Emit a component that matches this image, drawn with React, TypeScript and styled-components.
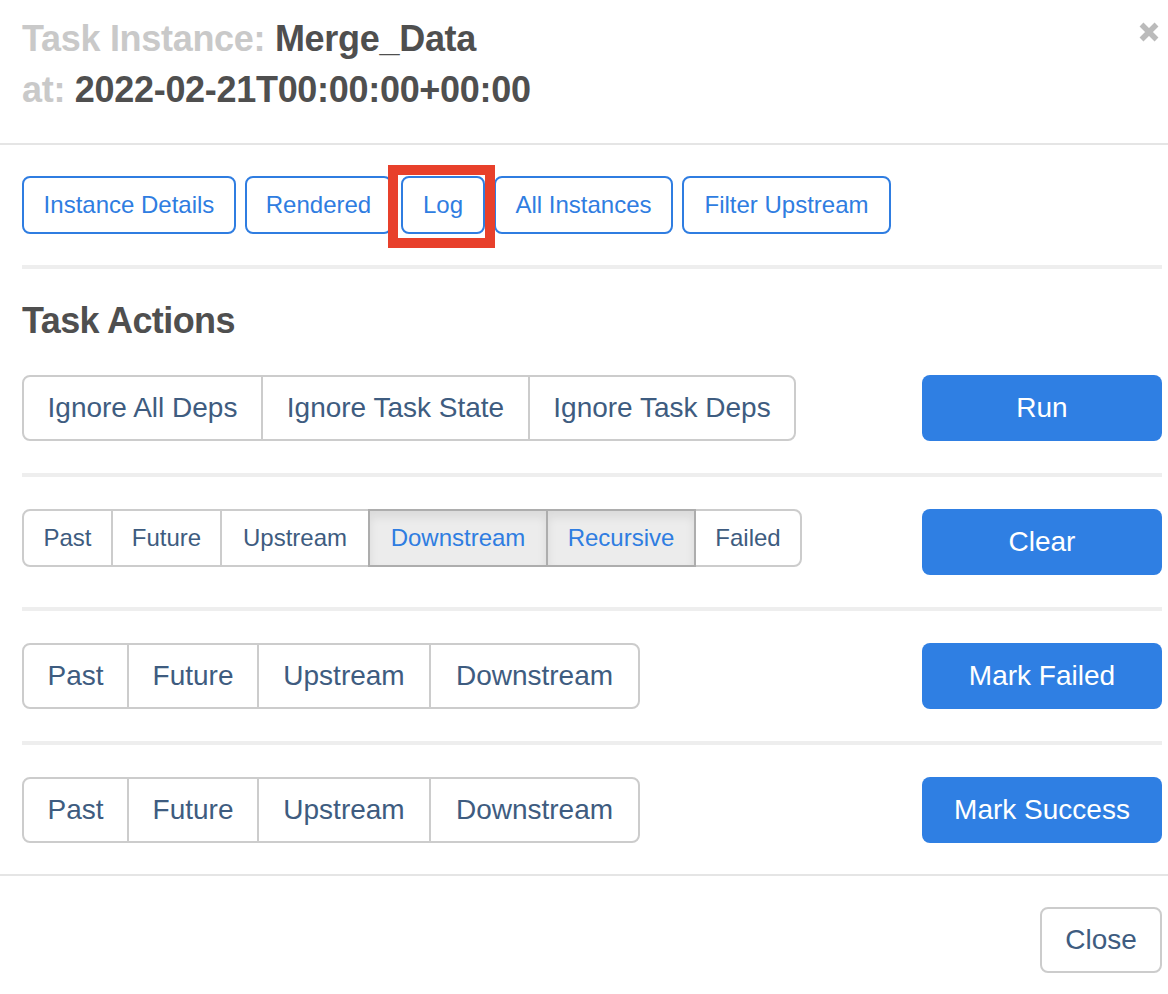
import React from 'react';
import styled, { createGlobalStyle, css } from 'styled-components';

const GlobalStyle = createGlobalStyle`
    html, body {
        margin: 0;
        padding: 0;
        background: #fff;
    }
    body {
        font-family: "Liberation Sans", Arial, Helvetica, sans-serif;
        -webkit-font-smoothing: antialiased;
    }
`;

// Modal shell
const Modal = styled.div`
    width: 1168px;
    height: 994px;
    background: #fff;
    overflow: hidden;
`;

const Header = styled.div`
    display: flex;
    justify-content: space-between;
    align-items: flex-start;
    padding: 13px 9px 28px 22px;
    border-bottom: 2px solid #e5e5e5;
`;

const Title = styled.h4`
    margin: 0;
    font-size: 36px;
    line-height: 51px;
    font-weight: 700;
    letter-spacing: -0.3px;
    color: #4f4f4f;
`;

const Label = styled.span`
    color: #c9c9c9;
`;

const CloseX = styled.button`
    margin-top: 9px;
    width: 20px;
    height: 20px;
    padding: 0;
    border: none;
    background: none;
    cursor: pointer;
    display: flex;
`;

const Body = styled.div`
    padding: 31px 6px 31px 22px;
`;

const NavRow = styled.div`
    display: flex;
    gap: 9px;
`;

const NavButton = styled.a<{ $w: number }>`
    box-sizing: border-box;
    width: ${(p) => p.$w}px;
    height: 58px;
    display: inline-flex;
    align-items: center;
    justify-content: center;
    border: 2px solid #2f7de1;
    border-radius: 8px;
    color: #2f7de1;
    font-size: 24px;
    text-decoration: none;
    background: #fff;
    cursor: pointer;
`;

// red annotation box drawn over the Log button
const Highlight = styled.div`
    position: relative;
    display: flex;

    &::after {
        content: '';
        position: absolute;
        left: -13px;
        right: -10px;
        top: -11px;
        bottom: -14px;
        border: 10px solid #e8402b;
        pointer-events: none;
    }
`;

const Divider = styled.hr<{ $top?: number; $bottom?: number }>`
    margin: ${(p) => p.$top ?? 32}px 0 ${(p) => p.$bottom ?? 32}px;
    border: 0;
    border-top: 4px solid #eeeeee;
`;

const SectionTitle = styled.h3`
    margin: 32px 0 34px;
    font-size: 36px;
    line-height: 40px;
    font-weight: 700;
    letter-spacing: -0.6px;
    color: #4f4f4f;
`;

const ActionRow = styled.div`
    display: flex;
    justify-content: space-between;
    align-items: flex-start;
`;

const Group = styled.div`
    display: flex;
`;

const GroupButton = styled.button<{ $w: number; $small?: boolean; $active?: boolean }>`
    box-sizing: border-box;
    width: ${(p) => p.$w}px;
    height: ${(p) => (p.$small ? 58 : 66)}px;
    padding: 0;
    display: inline-flex;
    align-items: center;
    justify-content: center;
    font-family: inherit;
    font-size: ${(p) => (p.$small ? 24 : 28)}px;
    color: #3e5c80;
    background: #fff;
    border: 2px solid #cccccc;
    border-radius: 0;
    position: relative;
    cursor: pointer;

    & + & {
        margin-left: -2px;
    }
    &:first-child {
        border-radius: 8px 0 0 8px;
    }
    &:last-child {
        border-radius: 0 8px 8px 0;
    }

    ${(p) =>
        p.$active &&
        css`
            z-index: 2;
            color: #2f7de1;
            background: #ececec;
            border-color: #adadad;
            box-shadow: inset 0 6px 10px rgba(0, 0, 0, 0.08);
        `}
`;

const PrimaryButton = styled.button`
    box-sizing: border-box;
    width: 240px;
    height: 66px;
    border: none;
    border-radius: 8px;
    background: #2f7fe3;
    color: #fff;
    font-family: inherit;
    font-size: 28px;
    cursor: pointer;
`;

const Footer = styled.div`
    display: flex;
    justify-content: flex-end;
    padding: 31px 6px 21px;
    border-top: 2px solid #e5e5e5;
`;

const DefaultButton = styled.button`
    box-sizing: border-box;
    width: 122px;
    height: 66px;
    border: 2px solid #cccccc;
    border-radius: 8px;
    background: #fff;
    color: #3e5c80;
    font-family: inherit;
    font-size: 28px;
    cursor: pointer;
`;

type Item = { label: string; w: number; active?: boolean };

const ignoreOpts: Item[] = [
    { label: 'Ignore All Deps', w: 241 },
    { label: 'Ignore Task State', w: 269 },
    { label: 'Ignore Task Deps', w: 268 },
];

const clearOpts: Item[] = [
    { label: 'Past', w: 91 },
    { label: 'Future', w: 111 },
    { label: 'Upstream', w: 150 },
    { label: 'Downstream', w: 180, active: true },
    { label: 'Recursive', w: 150, active: true },
    { label: 'Failed', w: 108 },
];

const markOpts: Item[] = [
    { label: 'Past', w: 107 },
    { label: 'Future', w: 132 },
    { label: 'Upstream', w: 174 },
    { label: 'Downstream', w: 211 },
];

const navLinks = [
    { label: 'Instance Details', w: 214 },
    { label: 'Rendered', w: 147 },
    { label: 'Log', w: 84, marked: true },
    { label: 'All Instances', w: 179 },
    { label: 'Filter Upstream', w: 209 },
];

const Options = ({ items, small }: { items: Item[]; small?: boolean }) => (
    <Group>
        {items.map((it) => (
            <GroupButton key={it.label} $w={it.w} $small={small} $active={it.active}>
                {it.label}
            </GroupButton>
        ))}
    </Group>
);

const App = () => {
    return (
        <>
            <GlobalStyle />
            <Modal>
                <Header>
                    <Title>
                        <Label>Task Instance:</Label> Merge_Data
                        <br />
                        <Label>at:</Label> 2022-02-21T00:00:00+00:00
                    </Title>
                    <CloseX aria-label="Close">
                        <svg width="20" height="20" viewBox="0 0 20 20">
                            <path d="M2.5 2.5 L17.5 17.5 M17.5 2.5 L2.5 17.5" stroke="#bbbbbb" strokeWidth="5.5" />
                        </svg>
                    </CloseX>
                </Header>

                <Body>
                    <NavRow>
                        {navLinks.map((l) =>
                            l.marked ? (
                                <Highlight key={l.label}>
                                    <NavButton $w={l.w}>{l.label}</NavButton>
                                </Highlight>
                            ) : (
                                <NavButton key={l.label} $w={l.w}>
                                    {l.label}
                                </NavButton>
                            )
                        )}
                    </NavRow>

                    <Divider $top={31} $bottom={0} />
                    <SectionTitle>Task Actions</SectionTitle>

                    <ActionRow>
                        <Options items={ignoreOpts} />
                        <PrimaryButton>Run</PrimaryButton>
                    </ActionRow>
                    <Divider />

                    <ActionRow>
                        <Options items={clearOpts} small />
                        <PrimaryButton>Clear</PrimaryButton>
                    </ActionRow>
                    <Divider />

                    <ActionRow>
                        <Options items={markOpts} />
                        <PrimaryButton>Mark Failed</PrimaryButton>
                    </ActionRow>
                    <Divider />

                    <ActionRow>
                        <Options items={markOpts} />
                        <PrimaryButton>Mark Success</PrimaryButton>
                    </ActionRow>
                </Body>

                <Footer>
                    <DefaultButton>Close</DefaultButton>
                </Footer>
            </Modal>
        </>
    );
};

export default App;
